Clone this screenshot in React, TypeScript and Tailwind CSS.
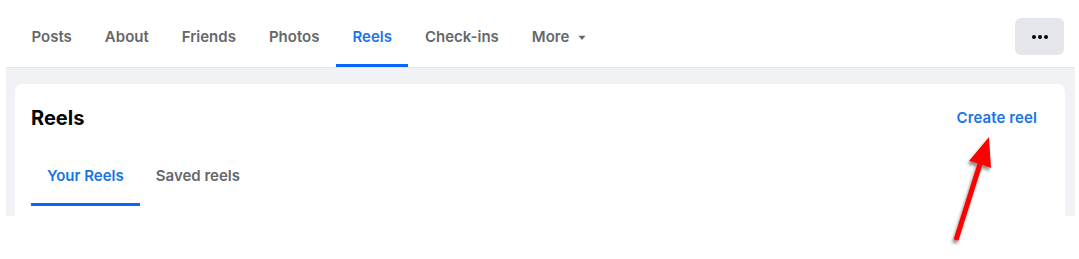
import React from "react";

const profileTabs = ["Posts", "About", "Friends", "Photos", "Reels", "Check-ins"];

const App: React.FC = () => {
  return (
    <div className="relative w-[1079px] h-[259px] bg-white overflow-hidden font-['Inter',sans-serif]">
      {/* profile tab bar */}
      <div className="flex justify-between h-[67px] px-[15px]">
        <div className="flex self-end">
          {profileTabs.map((tab) => (
            <div
              key={tab}
              className={`h-[60px] flex items-center px-[16.5px] pt-[4px] border-b-[3px] text-[15px] font-semibold ${
                tab === "Reels" ? "border-[#0866ff] text-[#1b74e4]" : "border-transparent text-[#65676b]"
              }`}
            >
              {tab}
            </div>
          ))}
          <div className="h-[60px] flex items-center px-[16.5px] pt-[4px] border-b-[3px] border-transparent text-[15px] font-semibold text-[#65676b]">
            More
            <svg className="ml-[9px]" width="8" height="6" viewBox="0 0 8 6">
              <path d="M0.5 0.8 H7.5 L4 5 Z" fill="#65676b" />
            </svg>
          </div>
        </div>
        <button className="mt-[18px] w-[49px] h-[37px] rounded-md bg-[#e4e6eb] flex items-center justify-center">
          <svg width="16" height="4" viewBox="0 0 16 4">
            <circle cx="2" cy="2" r="2" fill="#050505" />
            <circle cx="8" cy="2" r="2" fill="#050505" />
            <circle cx="14" cy="2" r="2" fill="#050505" />
          </svg>
        </button>
      </div>

      {/* grey page area with the reels card */}
      <div className="ml-[6px] w-[1069px] h-[149px] bg-[#f0f2f5] border-t border-[#e4e6eb] pt-4 pl-[9px] pr-[10px]">
        <div className="h-[132px] bg-white rounded-t-lg pt-4">
          <div className="flex items-center justify-between h-9 px-4">
            <div className="text-[20px] font-bold text-[#050505] leading-6">Reels</div>
            <button className="h-9 px-3 rounded-md text-[15px] font-semibold tracking-[0.1px] text-[#1b74e4]">
              Create reel
            </button>
          </div>
          <div className="flex px-4 mt-[10px]">
            <div className="h-[60px] flex items-center px-4 pt-[3px] border-b-[3px] border-[#0866ff] text-[15px] font-semibold text-[#1b74e4]">
              Your Reels
            </div>
            <div className="h-[60px] flex items-center px-4 pt-[3px] border-b-[3px] border-transparent text-[15px] font-semibold text-[#65676b]">
              Saved reels
            </div>
          </div>
        </div>
      </div>

      {/* red annotation arrow */}
      <svg className="absolute inset-0 pointer-events-none" width="1079" height="259" viewBox="0 0 1079 259">
        <defs>
          <filter id="arrowShadow" x="-50%" y="-50%" width="200%" height="200%">
            <feDropShadow dx="-1.5" dy="3" stdDeviation="1.5" floodColor="#000" floodOpacity="0.45" />
          </filter>
        </defs>
        <path
          d="M953.6 239.2 L977.6 163.2 L969 161 L989 137 L991 168 L982.4 164.8 L958.4 240.8 Z"
          fill="#ff0000"
          filter="url(#arrowShadow)"
        />
      </svg>
    </div>
  );
};

export default App;
